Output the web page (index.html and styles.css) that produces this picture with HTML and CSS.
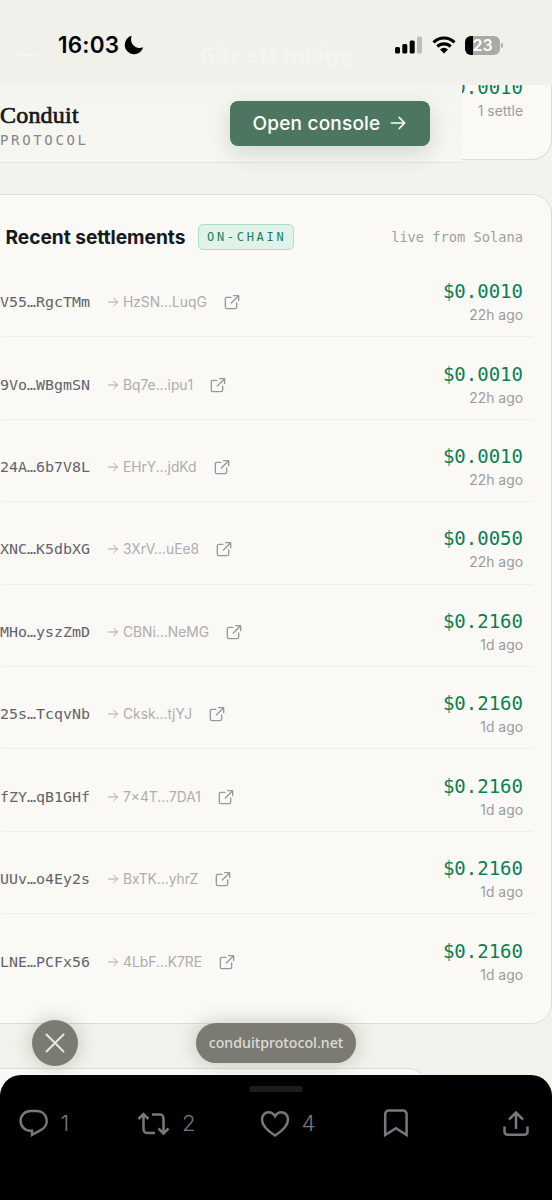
FILE: index.html
```html
<!DOCTYPE html>
<html lang="en">
<head>
<meta charset="utf-8">
<meta name="viewport" content="width=device-width">
<title>Conduit Protocol</title>
<link rel="stylesheet" href="styles.css">
</head>
<body>
<svg width="0" height="0" class="defs">
  <symbol id="arrow" viewBox="0 0 24 24"><path d="M3 12h18M13.500 4.500 21 12l-7.500 7.500"/></symbol>
  <symbol id="external" viewBox="0 0 24 24"><path d="M14.500 2.500H22v7.500M22 2.500 11 13.500M19 13.500v6a2.500 2.500 0 0 1-2.500 2.500h-12A2.500 2.500 0 0 1 2 19.500v-12A2.500 2.500 0 0 1 4.500 5h6"/></symbol>
</svg>
<div class="phone">
  <header class="status">
    <div class="ghost">
      <svg width="24" height="20" viewBox="0 0 24 20"><path d="M22 10H3M10 2 2 10l8 8"/></svg>
      <span class="ghost-title">Gör ett inlägg</span>
      <span class="ghost-more">•••</span>
    </div>
    <span class="time">16:03</span>
    <svg class="moon" width="20" height="20" viewBox="0 0 20 20"><path d="M7.700.8A9.400 9.400 0 1 0 19.200 12.200C12 15.200 4.800 8.600 7.700.8Z"/></svg>
    <div class="indicators">
      <svg width="28" height="18" viewBox="0 0 28 18"><rect x="0" y="11" width="5" height="6.500" rx="1.500"/><rect x="7.300" y="8" width="5" height="9.500" rx="1.500"/><rect x="14.700" y="4.500" width="5" height="13" rx="1.500"/><rect class="dim" x="22" y="0.500" width="5" height="17" rx="1.500"/></svg>
      <svg width="24" height="18" viewBox="0 0 24 18"><g class="waves"><path d="M1.500 6.300a15 15 0 0 1 21 0"/><path d="M5.300 10.500a9.600 9.600 0 0 1 13.400 0"/></g><path d="m12 17.500 4-4a5.700 5.700 0 0 0-8 0Z"/></svg>
      <div class="battery"><span>23</span></div>
    </div>
  </header>

  <main class="web">
    <nav class="nav">
      <div class="brand"><strong>Conduit</strong><small>PROTOCOL</small></div>
      <a class="console">Open console <svg width="18" height="18"><use href="#arrow"/></svg></a>
    </nav>
    <section class="card summary">
      <div class="amount">$0.0010</div>
      <div class="ago">1 settle</div>
    </section>
    <section class="card settlements">
      <div class="card-head">
        <h2>Recent settlements</h2>
        <span class="tag">ON-CHAIN</span>
        <span class="live">live from Solana</span>
      </div>
      <ul class="rows">
        <li><span class="from">V55…RgcTMm</span><svg class="to-arrow"><use href="#arrow"/></svg><span class="to">HzSN...LuqG</span><svg class="ext"><use href="#external"/></svg><div class="value"><div class="amount">$0.0010</div><div class="ago">22h ago</div></div></li>
        <li><span class="from">9Vo…WBgmSN</span><svg class="to-arrow"><use href="#arrow"/></svg><span class="to">Bq7e...ipu1</span><svg class="ext"><use href="#external"/></svg><div class="value"><div class="amount">$0.0010</div><div class="ago">22h ago</div></div></li>
        <li><span class="from">24A…6b7V8L</span><svg class="to-arrow"><use href="#arrow"/></svg><span class="to">EHrY...jdKd</span><svg class="ext"><use href="#external"/></svg><div class="value"><div class="amount">$0.0010</div><div class="ago">22h ago</div></div></li>
        <li><span class="from">XNC…K5dbXG</span><svg class="to-arrow"><use href="#arrow"/></svg><span class="to">3XrV...uEe8</span><svg class="ext"><use href="#external"/></svg><div class="value"><div class="amount">$0.0050</div><div class="ago">22h ago</div></div></li>
        <li><span class="from">MHo…yszZmD</span><svg class="to-arrow"><use href="#arrow"/></svg><span class="to">CBNi...NeMG</span><svg class="ext"><use href="#external"/></svg><div class="value"><div class="amount">$0.2160</div><div class="ago">1d ago</div></div></li>
        <li><span class="from">25s…TcqvNb</span><svg class="to-arrow"><use href="#arrow"/></svg><span class="to">Cksk...tjYJ</span><svg class="ext"><use href="#external"/></svg><div class="value"><div class="amount">$0.2160</div><div class="ago">1d ago</div></div></li>
        <li><span class="from">fZY…qB1GHf</span><svg class="to-arrow"><use href="#arrow"/></svg><span class="to">7×4T...7DA1</span><svg class="ext"><use href="#external"/></svg><div class="value"><div class="amount">$0.2160</div><div class="ago">1d ago</div></div></li>
        <li><span class="from">UUv…o4Ey2s</span><svg class="to-arrow"><use href="#arrow"/></svg><span class="to">BxTK...yhrZ</span><svg class="ext"><use href="#external"/></svg><div class="value"><div class="amount">$0.2160</div><div class="ago">1d ago</div></div></li>
        <li><span class="from">LNE…PCFx56</span><svg class="to-arrow"><use href="#arrow"/></svg><span class="to">4LbF...K7RE</span><svg class="ext"><use href="#external"/></svg><div class="value"><div class="amount">$0.2160</div><div class="ago">1d ago</div></div></li>
      </ul>
    </section>
    <section class="card next"></section>
    <button class="close" aria-label="Close"><svg width="20" height="20" viewBox="0 0 20 20"><path d="m1.500 1.500 17 17M18.500 1.500l-17 17"/></svg></button>
    <div class="address">conduitprotocol.net</div>
  </main>

  <footer class="sheet">
    <div class="handle"></div>
    <div class="actions">
      <div class="action"><svg width="30" height="30" viewBox="0 0 30 30"><path d="M11.500 2h6.300a9.900 9.900 0 0 1 4.900 18.500L13 25.800v-4h-1.500A9.900 9.900 0 0 1 11.500 2Z"/></svg><span>1</span></div>
      <div class="action"><svg width="33" height="26" viewBox="0 0 33 26"><path d="m1.500 8 5-5 5 5M6.500 3.500v15a3.500 3.500 0 0 0 3.500 3.500h8M15 3.500h8A3.500 3.500 0 0 1 26.500 7v15M21.500 17.500l5 5 5-5"/></svg><span>2</span></div>
      <div class="action"><svg width="30" height="28" viewBox="0 0 30 28"><path d="M15 25.500C6.500 20 2 15 2 9.700 2 5 5.200 2.200 8.600 2.200c2.700 0 4.900 1.400 6.400 4 1.500-2.600 3.700-4 6.400-4C24.800 2.200 28 5 28 9.700c0 5.300-4.500 10.300-13 15.800Z"/></svg><span>4</span></div>
      <div class="action"><svg width="26" height="30" viewBox="0 0 26 30"><path d="M2.200 26V5A3.400 3.400 0 0 1 5.600 1.500h14.600A3.400 3.400 0 0 1 23.600 5v21l-10.700-6.700Z"/></svg></div>
      <div class="action"><svg width="26" height="28" viewBox="0 0 26 28"><path d="M13 19V3M6 9.500l7-7 7 7M1.500 16.500v5.300a3 3 0 0 0 3 3h17a3 3 0 0 0 3-3v-5.300"/></svg></div>
    </div>
  </footer>
</div>
</body>
</html>
```

FILE: styles.css
```css
* { box-sizing: border-box; }
body { margin: 0; font-family: Inter, sans-serif; background: #f4f3ee; }
svg { display: block; flex: none; fill: none; stroke: currentColor; stroke-width: 2; stroke-linecap: round; stroke-linejoin: round; }
.defs { position: absolute; }
.phone { width: 552px; height: 1200px; overflow: hidden; display: flex; flex-direction: column; }

/* System status bar */
.status { position: relative; flex: none; height: 85px; background: #f1f0ea; color: #000; display: flex; align-items: flex-start; }
.time { margin: 31px 0 0 58px; width: 62px; font-size: 22.500px; line-height: 28px; font-weight: 600; letter-spacing: .2px; white-space: nowrap; }
.moon { margin: 35px 0 0 4px; fill: #000; stroke: none; }
.indicators { display: flex; align-items: center; gap: 9px; margin: 35px 0 0 251px; height: 20px; }
.indicators svg { fill: #000; stroke: none; }
.indicators .waves { fill: none; stroke: #000; stroke-width: 3.200; stroke-linecap: butt; }
.indicators .dim { fill: #bdbcb7; }
.battery { position: relative; width: 35px; height: 19px; border-radius: 6px; background: linear-gradient(90deg, #000 8px, #aaa9a5 8px); color: #fff; font-size: 16px; font-weight: 600; line-height: 19px; text-align: center; }
.battery::after { content: ""; position: absolute; left: 36px; top: 7px; width: 2px; height: 5px; border-radius: 0 2px 2px 0; background: #aaa9a5; }
.ghost { position: absolute; inset: 0; color: #f5f4ef; }
.ghost svg { position: absolute; left: 16px; top: 45px; }
.ghost-title { position: absolute; left: 200px; top: 39px; font: 700 22.200px/32px "Noto Sans", sans-serif; white-space: nowrap; }
.ghost-more { position: absolute; left: 503px; top: 44px; font-size: 12px; letter-spacing: 3px; }

/* Page shown in the in-app browser */
.web { position: relative; flex: none; height: 1012px; margin-bottom: -22px; overflow: hidden; background: linear-gradient(#f5f4f0, #f3f2ec 90px, #f4f3ee 50%, #f2f1eb); }
.card { display: flow-root; width: 572px; margin-left: -20px; border: 1.500px solid #dddcd8; border-radius: 20px; background: #faf9f6; }
.summary { height: 75px; border-top: 0; border-radius: 0 0 20px 20px; padding-right: 28px; text-align: right; }
.summary .amount { margin-top: -11px; }
.nav { position: absolute; z-index: 1; left: 0; top: 0; width: 462px; height: 78px; display: flex; align-items: flex-start; justify-content: space-between; padding: 16px 32px 0 0; border-bottom: 1px solid #e4e3de; background: linear-gradient(#f5f5f0, #f7f6f2); }
.brand { display: flex; flex-direction: column; color: #151920; }
.brand strong { font: 400 24px/28px "Liberation Serif", serif; -webkit-text-stroke: .7px; letter-spacing: .2px; }
.brand small { font: 14px/18px "DejaVu Sans Mono", monospace; letter-spacing: 2.650px; color: #85858a; margin-top: 2px; }
.console { width: 200px; height: 44.500px; display: flex; align-items: center; justify-content: center; gap: 9px; border-radius: 8px; background: #4d7661; color: #fff; font-size: 19px; font-weight: 500; letter-spacing: .2px; box-shadow: 0 7px 22px rgba(55, 95, 75, .2); white-space: nowrap; }

.settlements { margin-top: 34px; height: 830px; }
.card-head { display: flex; align-items: center; height: 60px; padding: 23px 28px 0 24.500px; white-space: nowrap; }
.card-head h2 { margin: 0; width: 192.500px; font-size: 19.200px; line-height: 28px; font-weight: 700; color: #151920; letter-spacing: -.05px; }
.tag { width: 96px; height: 26px; padding-left: 8px; border: 1.500px solid #a9dfc8; border-radius: 5px; background: #e1f2ea; color: #16805a; font: 12px/24px "DejaVu Sans Mono", monospace; letter-spacing: 2.700px; }
.live { margin-left: auto; font: 13.700px/20px "DejaVu Sans Mono", monospace; color: #a0a0a2; }
.rows { list-style: none; margin: 0; padding: 0 18px 0 20px; }
.rows li { display: flex; align-items: center; height: 82.400px; padding: 13px 10px 0 0; border-bottom: 1.500px solid #f0efec; white-space: nowrap; }
.rows li:last-child { border-bottom: 0; }
.from { margin-left: -1px; width: 91px; font: 14.950px/20px "DejaVu Sans Mono", monospace; color: #63646b; }
.to-arrow { width: 12px; height: 12px; margin: 0 4px 0 16px; color: #a9a9aa; }
.to { font-size: 13.800px; line-height: 20px; color: #adadae; }
.ext { width: 16px; height: 16px; margin-left: 17px; color: #98989b; }
.value { margin-left: auto; text-align: right; }
.amount { font: 19px/26px "DejaVu Sans Mono", monospace; color: #0d7f55; }
.ago { font-size: 13.900px; line-height: 22px; color: #9c9c9f; }
.next { width: 448px; height: 60px; margin-top: 44px; }

/* Floating browser controls */
.close, .address { position: absolute; z-index: 2; background: #7b7a73; color: #e8e7e1; box-shadow: 0 0 20px rgba(70, 68, 60, .28); }
.close { left: 32px; top: 935px; width: 46px; height: 46px; padding: 0; border: 0; border-radius: 50%; display: grid; place-items: center; }
.address { left: 196px; top: 938px; width: 160px; height: 40px; border-radius: 20px; font: 500 14.200px/40px "Noto Sans", sans-serif; text-align: center; color: #dedcd7; white-space: nowrap; }

/* Post actions */
.sheet { position: relative; z-index: 3; flex: 1; background: #000; border-radius: 21px 21px 0 0; color: #75787c; }
.handle { width: 54px; height: 6px; border-radius: 3px; background: #1c1c1e; margin: 11px auto 0; }
.actions { display: grid; grid-template-columns: 118.500px 122.500px 123px 120px 1fr; padding: 15px 0 0 18.500px; }
.action { display: flex; align-items: center; height: 33px; gap: 12px; font: 300 22px/33px Inter, sans-serif; }
.action svg { stroke-width: 2.500; stroke-linecap: butt; stroke-linejoin: miter; }
```
